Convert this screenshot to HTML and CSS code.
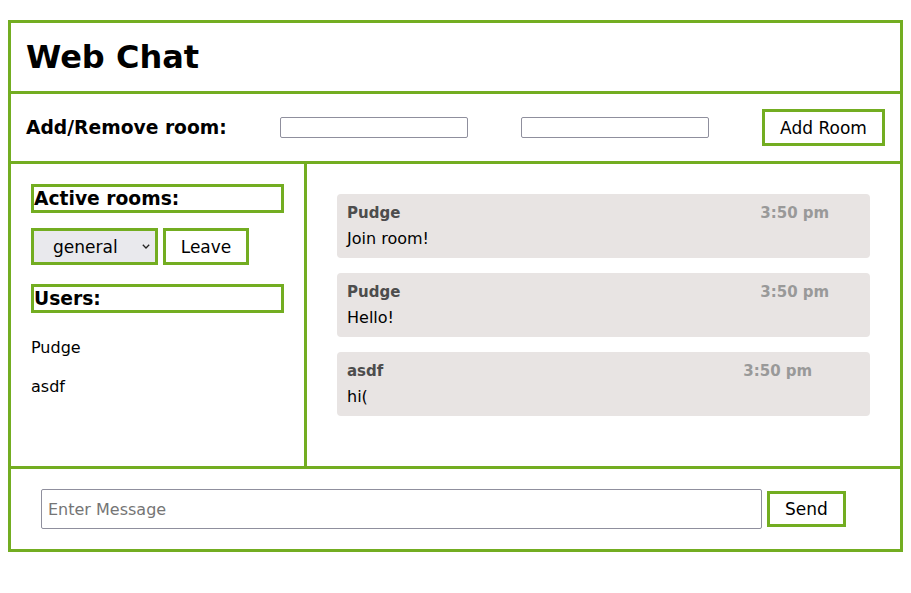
FILE: index.html
```html
<!DOCTYPE html>
<html lang="en">
<head>
<meta charset="utf-8">
<title>Web Chat</title>
<link rel="stylesheet" href="styles.css">
</head>
<body>
<div class="app">
  <header class="header">
    <h1 class="title">Web Chat</h1>
  </header>
  <section class="rooms-bar">
    <h3 class="bar-label">Add/Remove room:</h3>
    <input class="small-input" type="text">
    <input class="small-input" type="text">
    <button class="green-btn add-btn">Add Room</button>
  </section>
  <main class="main">
    <aside class="sidebar">
      <h3 class="box-title">Active rooms:</h3>
      <div class="room-controls">
        <span class="select-wrap">
          <select class="room-select">
            <option>general</option>
          </select>
          <svg class="chevron" width="8" height="5" viewBox="0 0 8 5"><path d="M0.8 0.8 L4 4 L7.2 0.8" fill="none" stroke="#222" stroke-width="1.3"/></svg>
        </span>
        <button class="green-btn leave-btn">Leave</button>
      </div>
      <h3 class="box-title">Users:</h3>
      <ul class="users">
        <li>Pudge</li>
        <li>asdf</li>
      </ul>
    </aside>
    <section class="messages">
      <div class="msg">
        <div class="msg-head"><span class="msg-name">Pudge</span><span class="msg-time">3:50 pm</span></div>
        <div class="msg-text">Join room!</div>
      </div>
      <div class="msg">
        <div class="msg-head"><span class="msg-name">Pudge</span><span class="msg-time">3:50 pm</span></div>
        <div class="msg-text">Hello!</div>
      </div>
      <div class="msg">
        <div class="msg-head"><span class="msg-name">asdf</span><span class="msg-time">3:50 pm</span></div>
        <div class="msg-text">hi(</div>
      </div>
    </section>
  </main>
  <footer class="composer">
    <input class="msg-input" type="text" placeholder="Enter Message">
    <button class="green-btn send-btn">Send</button>
  </footer>
</div>
</body>
</html>
```
FILE: styles.css
```css
* { box-sizing: border-box; }
body {
  margin: 8px;
  font-family: "DejaVu Sans", sans-serif;
  font-size: 16px;
  color: #000;
  background: #fff;
}
.app {
  margin-top: 12px;
  border: 3px solid #73ad21;
}
.header {
  border-bottom: 3px solid #73ad21;
  padding: 15px 15px;
}
.title {
  margin: 0;
  font-size: 32px;
  line-height: 38px;
  font-weight: bold;
}
.rooms-bar {
  border-bottom: 3px solid #73ad21;
  padding: 15px 15px;
  display: flex;
  justify-content: space-between;
  align-items: center;
}
.bar-label {
  margin: 0;
  font-size: 18.72px;
  line-height: 22px;
}
.small-input {
  width: 188px;
  height: 21px;
  border: 1px solid #8f8f9d;
  border-radius: 2px;
  padding: 1px 2px;
  font: inherit;
  font-size: 13px;
}
.green-btn {
  font-family: "DejaVu Sans", sans-serif;
  font-size: 17px;
  line-height: 20px;
  background: #fff;
  color: #000;
  border: 3px solid #73ad21;
  padding: 5px 0;
  border-radius: 0;
  height: 37px;
  text-align: center;
}
.add-btn { width: 123px; }
.main {
  display: flex;
  height: 305px;
  border-bottom: 3px solid #73ad21;
}
.sidebar {
  width: 296px;
  border-right: 3px solid #73ad21;
  padding: 20px 20px 0 20px;
}
.box-title {
  margin: 0;
  border: 3px solid #73ad21;
  font-size: 18.72px;
  line-height: 23px;
}
.room-controls {
  display: flex;
  gap: 5px;
  margin: 15px 0 19px;
}
.select-wrap {
  position: relative;
  display: inline-block;
}
.room-select {
  appearance: none;
  -webkit-appearance: none;
  width: 127px;
  height: 37px;
  background: #e9e9ed;
  border: 3px solid #73ad21;
  border-radius: 0;
  padding: 0 20px 0 19px;
  font-family: "DejaVu Sans", sans-serif;
  font-size: 17px;
  color: #000;
}
.chevron {
  position: absolute;
  right: 8px;
  top: 16px;
}
.leave-btn { width: 86px; }
.users {
  list-style: none;
  margin: 15px 0 0;
  padding: 0;
}
.users li {
  padding: 10px 0;
  line-height: 19px;
}
.messages {
  flex: 1;
  padding: 30px 30px 0 30px;
  display: flex;
  flex-direction: column;
  gap: 15px;
}
.msg {
  background: #e8e4e3;
  border-radius: 4px;
  padding: 11px 10px 8px;
  height: 64px;
}
.msg-head {
  font-size: 15px;
  line-height: 17px;
  font-weight: bold;
  margin-bottom: 7px;
  white-space: nowrap;
}
.msg-name { color: #4d4d4d; }
.msg-time {
  color: #999;
  margin-left: 360px;
}
.msg-text {
  line-height: 19px;
}
.composer {
  padding: 20px 30px;
  display: flex;
  align-items: center;
  gap: 5px;
}
.msg-input {
  width: 721px;
  height: 40px;
  border: 1px solid #8f8f9d;
  border-radius: 2px;
  padding: 0 6px;
  font-family: "DejaVu Sans", sans-serif;
  font-size: 16px;
}
.msg-input::placeholder { color: #757575; }
.send-btn {
  height: 36px;
  padding: 5px 0;
  width: 79px;
}
```
